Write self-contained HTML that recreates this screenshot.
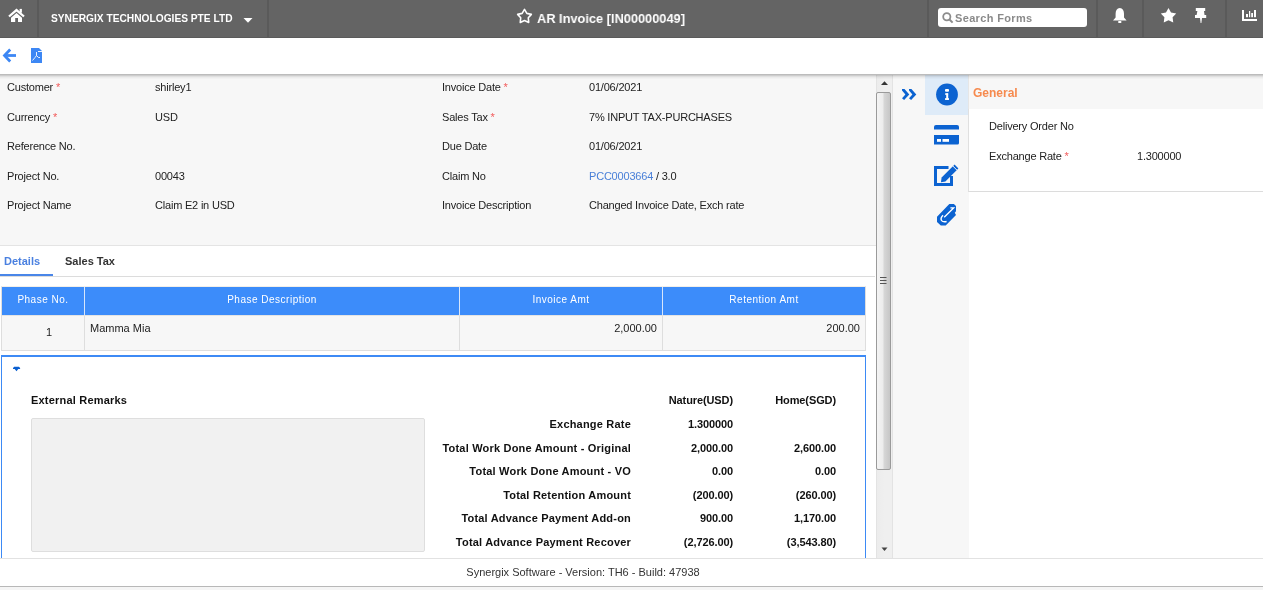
<!DOCTYPE html>
<html><head><meta charset="utf-8">
<style>
*{box-sizing:border-box;margin:0;padding:0}
.a,.lbl,.sb,.th{will-change:transform}
html,body{width:1263px;height:590px;overflow:hidden;background:#f5f5f5;font-family:"Liberation Sans",sans-serif;font-size:11px;color:#333}
.a{position:absolute;white-space:nowrap}
#hdr{position:absolute;left:0;top:0;width:1263px;height:38px;background:#646464;border-bottom:1px solid #5a5a5a}
.sep{position:absolute;top:0;width:2px;height:37px;background:#5a5a5a}
#tb{position:absolute;left:0;top:38px;width:1263px;height:36px;background:#fff;z-index:5}
#shd{position:absolute;left:0;top:74px;width:1263px;height:6px;z-index:5;background:linear-gradient(to bottom,#bcbcbc 0,#bcbcbc 1px,rgba(0,0,0,.17) 1px,rgba(0,0,0,.17) 2px,rgba(0,0,0,.09) 2px,rgba(0,0,0,.09) 3px,rgba(0,0,0,.045) 3px,rgba(0,0,0,.045) 4px,rgba(0,0,0,.02) 4px,rgba(0,0,0,.02) 5px,rgba(0,0,0,0) 5px)}
#form{position:absolute;left:0;top:74px;width:876px;height:172px;background:#f7f7f7;border-bottom:1px solid #e4e4e4}
.lbl{position:absolute;color:#222;line-height:13px;letter-spacing:-0.2px}
.req{color:#f25a5a}
#tabs{position:absolute;left:0;top:246px;width:875px;height:31px;background:#fff;border-bottom:1px solid #dcdcdc}
#grid{position:absolute;left:1px;top:286px;width:865px;height:65px;border:1px solid #dedede;border-top:1px solid #f3efe9;background:#f7f7f7}
.th{position:absolute;top:0;height:28px;background:#3c8cfa;color:#fff;text-align:center;line-height:13px;padding-top:6px;font-size:10px;letter-spacing:0.5px}
.td{position:absolute;top:28px;height:36px;width:1px;background:#dedede}
#exp{position:absolute;left:1px;top:355px;width:865px;height:211px;border:1px solid #3d8af5;border-top:2px solid #3d8af5;background:#fff}
.sb{position:absolute;color:#111;font-weight:bold;line-height:13px;text-align:right;letter-spacing:0.2px}
.sv{letter-spacing:-0.1px}
#foot{position:absolute;left:0;top:558px;width:1263px;height:29px;background:#fff;border-top:1px solid #e2e2e2;border-bottom:1px solid #b8b8b8;z-index:6}
#scroll{position:absolute;left:876px;top:74px;width:17px;height:484px;background:linear-gradient(to right,#e3e3e3 0,#e3e3e3 1px,#ececec 1px,#efefef 50%,#efefef calc(100% - 1px),#e3e3e3 calc(100% - 1px))}
#thumb{position:absolute;left:0;top:18px;width:15px;height:378px;border:1px solid #9a9a9a;border-radius:2px;background:linear-gradient(to right,#f4f4f4 0%,#ececec 45%,#d6d6d6 55%,#c6c6c6 100%)}
#side{position:absolute;left:893px;top:74px;width:76px;height:484px;background:#f7f7f7}
#gen{position:absolute;left:968px;top:74px;width:295px;height:35px;background:#f7f7f7;border-left:1px solid #e6e6e6}
#genb{position:absolute;left:968px;top:109px;width:295px;height:83px;background:#fff;border-left:1px solid #e0e0e0;border-bottom:1px solid #dcdcdc}
#ov{position:absolute;left:0;top:0;z-index:20;pointer-events:none}
</style></head>
<body>
<div id="hdr">
  <div class="sep" style="left:37px"></div>
  <div class="sep" style="left:267px"></div>
  <div class="sep" style="left:927px"></div>
  <div class="sep" style="left:1096px"></div>
  <div class="sep" style="left:1142px"></div>
  <div class="sep" style="left:1225px"></div>
  <div class="a" style="left:51px;top:12px;color:#fff;font-weight:bold;font-size:10.2px;line-height:13px">SYNERGIX TECHNOLOGIES PTE LTD</div>
  <div class="a" style="left:537px;top:10.6px;color:#fff;font-weight:bold;font-size:13.7px;line-height:16px;transform:scaleX(0.935);transform-origin:0 0">AR Invoice [IN00000049]</div>
  <div class="a" style="left:938px;top:8px;width:149px;height:19px;background:#fff;border-radius:3px"></div>
  <div class="a" style="left:955px;top:12px;color:#8a8a8a;font-weight:bold;font-size:11px;line-height:13px;letter-spacing:0.35px">Search Forms</div>
</div>
<div class="a" style="left:0;top:38px;width:1263px;height:520px;background:#fff"></div>
<div id="tb"></div><div id="shd"></div>
<div id="form">
  <div class="lbl" style="left:7px;top:7px">Customer <span class="req">*</span></div>
  <div class="lbl" style="left:155px;top:7px">shirley1</div>
  <div class="lbl" style="left:7px;top:37px">Currency <span class="req">*</span></div>
  <div class="lbl" style="left:155px;top:37px">USD</div>
  <div class="lbl" style="left:7px;top:66px">Reference No.</div>
  <div class="lbl" style="left:7px;top:96px">Project No.</div>
  <div class="lbl" style="left:155px;top:96px">00043</div>
  <div class="lbl" style="left:7px;top:125px">Project Name</div>
  <div class="lbl" style="left:155px;top:125px">Claim E2 in USD</div>
  <div class="lbl" style="left:442px;top:7px">Invoice Date <span class="req">*</span></div>
  <div class="lbl" style="left:589px;top:7px">01/06/2021</div>
  <div class="lbl" style="left:442px;top:37px">Sales Tax <span class="req">*</span></div>
  <div class="lbl" style="left:589px;top:37px">7% INPUT TAX-PURCHASES</div>
  <div class="lbl" style="left:442px;top:66px">Due Date</div>
  <div class="lbl" style="left:589px;top:66px">01/06/2021</div>
  <div class="lbl" style="left:442px;top:96px">Claim No</div>
  <div class="lbl" style="left:589px;top:96px"><span style="color:#4a80d8">PCC0003664</span> / 3.0</div>
  <div class="lbl" style="left:442px;top:125px">Invoice Description</div>
  <div class="lbl" style="left:589px;top:125px">Changed Invoice Date, Exch rate</div>
</div>
<div id="tabs">
  <div class="a" style="left:4px;top:9px;color:#4a80e0;font-weight:bold;line-height:13px">Details</div>
  <div class="a" style="left:0;top:28px;width:53px;height:2px;background:#4a86e8"></div>
  <div class="a" style="left:65px;top:9px;color:#333;font-weight:bold;line-height:13px">Sales Tax</div>
</div>
<div id="grid">
  <div class="th" style="left:0;width:82px">Phase No.</div>
  <div class="th" style="left:83px;width:374px">Phase Description</div>
  <div class="th" style="left:458px;width:202px">Invoice Amt</div>
  <div class="th" style="left:661px;width:202px">Retention Amt</div>
  <div class="a" style="left:82px;top:0;width:1px;height:28px;background:#d8e6fb"></div>
  <div class="a" style="left:457px;top:0;width:1px;height:28px;background:#d8e6fb"></div>
  <div class="a" style="left:660px;top:0;width:1px;height:28px;background:#d8e6fb"></div>
  <div class="td" style="left:82px"></div>
  <div class="td" style="left:457px"></div>
  <div class="td" style="left:660px"></div>
  <div class="a" style="left:0;top:28px;width:863px;height:1px;background:#e4e4e4"></div>
  <div class="a" style="left:44px;top:39px;line-height:13px;color:#222">1</div>
  <div class="a" style="left:88px;top:35px;line-height:13px;color:#222">Mamma Mia</div>
  <div class="a" style="left:458px;width:197px;text-align:right;top:35px;line-height:13px;color:#222">2,000.00</div>
  <div class="a" style="left:661px;width:197px;text-align:right;top:35px;line-height:13px;color:#222">200.00</div>
</div>
<div id="exp">
  <div class="a" style="left:29px;top:37px;font-weight:bold;color:#111;line-height:13px;letter-spacing:0.2px">External Remarks</div>
  <div class="a" style="left:29px;top:61px;width:394px;height:134px;background:#f1f1f1;border:1px solid #dedede;border-radius:2px"></div>
  <div class="sb sv" style="left:560px;width:171px;top:37px">Nature(USD)</div>
  <div class="sb sv" style="left:659px;width:175px;top:37px">Home(SGD)</div>
  <div class="sb" style="left:300px;width:329px;top:61px">Exchange Rate</div>
  <div class="sb sv" style="left:560px;width:171px;top:61px">1.300000</div>
  <div class="sb" style="left:300px;width:329px;top:85px">Total Work Done Amount - Original</div>
  <div class="sb sv" style="left:560px;width:171px;top:85px">2,000.00</div>
  <div class="sb sv" style="left:660px;width:174px;top:85px">2,600.00</div>
  <div class="sb" style="left:300px;width:329px;top:108px">Total Work Done Amount - VO</div>
  <div class="sb sv" style="left:560px;width:171px;top:108px">0.00</div>
  <div class="sb sv" style="left:660px;width:174px;top:108px">0.00</div>
  <div class="sb" style="left:300px;width:329px;top:132px">Total Retention Amount</div>
  <div class="sb sv" style="left:560px;width:171px;top:132px">(200.00)</div>
  <div class="sb sv" style="left:660px;width:174px;top:132px">(260.00)</div>
  <div class="sb" style="left:300px;width:329px;top:155px">Total Advance Payment Add-on</div>
  <div class="sb sv" style="left:560px;width:171px;top:155px">900.00</div>
  <div class="sb sv" style="left:660px;width:174px;top:155px">1,170.00</div>
  <div class="sb" style="left:300px;width:329px;top:179px">Total Advance Payment Recover</div>
  <div class="sb sv" style="left:560px;width:171px;top:179px">(2,726.00)</div>
  <div class="sb sv" style="left:660px;width:174px;top:179px">(3,543.80)</div>
</div>
<div id="scroll"><div id="thumb"></div></div>
<div id="side"><div class="a" style="left:32px;top:1px;width:43px;height:40px;background:#deebf8"></div></div>
<div id="gen"><div class="a" style="left:4px;top:12px;color:#f68a4e;font-weight:bold;font-size:12px;line-height:15px">General</div></div>
<div id="genb">
  <div class="lbl" style="left:20px;top:11px">Delivery Order No</div>
  <div class="lbl" style="left:20px;top:41px">Exchange Rate <span class="req">*</span></div>
  <div class="lbl" style="left:168px;top:41px">1.300000</div>
</div>
<div id="foot"><div class="a" style="left:0;width:1166px;text-align:center;top:7px;color:#333;line-height:13px">Synergix Software - Version: TH6 - Build: 47938</div></div>

<svg id="ov" width="1263" height="590" viewBox="0 0 1263 590">
  <!-- home -->
  <polyline points="9,16.5 16.5,10.1 24,16.5" fill="none" stroke="#fff" stroke-width="2.3"/>
  <rect x="19.6" y="8.9" width="2.3" height="3.8" fill="#fff"/>
  <path d="M11,17.7 L16.5,13 L22,17.7 L22,22 L18,22 L18,18.1 L15.2,18.1 L15.2,22 L11,22 Z" fill="#fff"/>
  <!-- caret -->
  <polygon points="243.5,18 252.5,18 248,22.8" fill="#fff"/>
  <!-- title star -->
  <polygon points="524.50,9.40 526.85,13.36 531.35,14.38 528.30,17.84 528.73,22.42 524.50,20.60 520.27,22.42 520.70,17.84 517.65,14.38 522.15,13.36" fill="none" stroke="#fff" stroke-width="1.6" stroke-linejoin="round"/>
  <!-- search -->
  <circle cx="946.8" cy="16.8" r="3.6" fill="none" stroke="#8c8c8c" stroke-width="1.8"/>
  <line x1="949.5" y1="19.5" x2="952.6" y2="22.6" stroke="#8c8c8c" stroke-width="2"/>
  <!-- bell -->
  <path d="M1119.8,8 C1117,8.3 1115.6,10.6 1115.6,13.8 L1115.6,17.5 L1113,20.5 L1126.6,20.5 L1124,17.5 L1124,13.8 C1124,10.6 1122.6,8.3 1119.8,8 Z" fill="#fff"/>
  <rect x="1118.3" y="21" width="3" height="2" fill="#fff"/>
  <!-- star solid -->
  <polygon points="1168.50,7.90 1171.03,12.52 1176.20,13.50 1172.59,17.33 1173.26,22.55 1168.50,20.30 1163.74,22.55 1164.41,17.33 1160.80,13.50 1165.97,12.52" fill="#fff"/>
  <!-- pin -->
  <rect x="1195.8" y="8" width="9.4" height="3" fill="#fff"/>
  <polygon points="1197.4,11 1204,11 1204.5,15 1196.6,15" fill="#fff"/>
  <rect x="1195" y="15" width="11.2" height="3" fill="#fff"/>
  <polygon points="1200,18 1202,18 1201.4,23 1200.6,23" fill="#fff"/>
  <!-- chart -->
  <rect x="1242" y="10" width="2" height="11" fill="#fff"/>
  <rect x="1242" y="19" width="15" height="2" fill="#fff"/>
  <rect x="1246" y="14" width="2" height="3.2" fill="#fff"/>
  <rect x="1249" y="11" width="1.2" height="6.2" fill="#fff"/>
  <rect x="1251.2" y="13" width="1.8" height="4.2" fill="#fff"/>
  <rect x="1254" y="10" width="2" height="7.2" fill="#fff"/>
  <!-- back arrow -->
  <polyline points="10.2,49.5 4.5,55.5 10.2,61.5" fill="none" stroke="#3d87f4" stroke-width="2.8"/>
  <line x1="4.5" y1="55.5" x2="16" y2="55.5" stroke="#3d87f4" stroke-width="2.8"/>
  <!-- pdf -->
  <path d="M31,48 L39,48 L42,51 L42,63 L31,63 Z" fill="#3d87f4"/>
  <path d="M38,51.5 L42,51.5" stroke="#fff" stroke-width="0.9"/>
  <path d="M36.5,52 L36.5,55.5 L35,57.5 M36.5,55.5 L38.5,57.5 L40,57.5 M35,57.5 L32.5,60.5" fill="none" stroke="#fff" stroke-width="0.9"/>
  <!-- scrollbar -->
  <polygon points="881,85 888,85 884.5,81.2" fill="#333"/>
  <line x1="880" y1="277.5" x2="886.5" y2="277.5" stroke="#555" stroke-width="1"/>
  <line x1="880" y1="280.5" x2="886.5" y2="280.5" stroke="#555" stroke-width="1"/>
  <line x1="880" y1="283.5" x2="886.5" y2="283.5" stroke="#555" stroke-width="1"/>
  <polygon points="881.5,547.6 887.5,547.6 884.5,551" fill="#444"/>
  <!-- >> -->
  <polygon points="902,88.9 904.5,88.9 909.3,94.4 904.1,99.9 902,98.2 905.4,94.4 902,90.6" fill="#0c63d1"/>
  <polygon points="909,88.9 911.4,88.9 916.3,94.4 911.1,99.9 909,98.2 912.4,94.4 909,90.6" fill="#0c63d1"/>
  <!-- info -->
  <circle cx="947" cy="94.5" r="10.9" fill="#0c63d1"/>
  <rect x="945" y="89" width="4" height="2.8" rx="1" fill="#fff"/>
  <rect x="945.1" y="93.3" width="3" height="1.5" fill="#fff"/>
  <rect x="946.2" y="93.3" width="2" height="6.6" fill="#fff"/>
  <rect x="945" y="98.2" width="4" height="1.7" fill="#fff"/>
  <!-- card -->
  <path d="M934,127 Q934,125 936,125 L957,125 Q959,125 959,127 L959,129.5 L934,129.5 Z" fill="#0c63d1"/>
  <path d="M934,135 L959,135 L959,143 Q959,144.5 957.5,144.5 L934,144.5 Z" fill="#0c63d1"/>
  <rect x="937" y="139" width="4" height="2.8" fill="#fff"/>
  <rect x="942.5" y="139" width="6.5" height="2.8" fill="#fff"/>
  <!-- edit -->
  <path d="M948.5,167.5 L935.5,167.5 L935.5,184.5 L951.5,184.5 L951.5,176" fill="none" stroke="#0c63d1" stroke-width="3"/>
  <polygon points="941,182.2 941.6,177.6 954.6,164.6 958.4,168.4 945.4,181.4" fill="#0c63d1"/>
  <line x1="952.7" y1="165.9" x2="957.1" y2="170.3" stroke="#f7f7f7" stroke-width="1"/>
  <!-- clip -->
  <polygon points="949.3,204 953.9,204 956,206.1 956,211.3 954.8,212.8 956,215 945.7,225.5 940.8,225.5 937,221.9 937,216.7" fill="#0c63d1"/>
  <path d="M950.4,207.9 L953.6,207.9 L944.2,217.3" fill="none" stroke="#fff" stroke-width="1.4"/>
  <path d="M943,215.2 Q940,218.2 941.6,220.6 Q943.2,222.4 946.6,221.5" fill="none" stroke="#fff" stroke-width="1.4"/>
  <!-- expand caret -->
  <polygon points="14.2,366.8 18.9,366.8 20.1,368 20.1,369.1 18.3,369.1 16.5,371.2 14.6,369.1 13,369.1 13,368" fill="#0c60d0"/>
</svg>
</body></html>
